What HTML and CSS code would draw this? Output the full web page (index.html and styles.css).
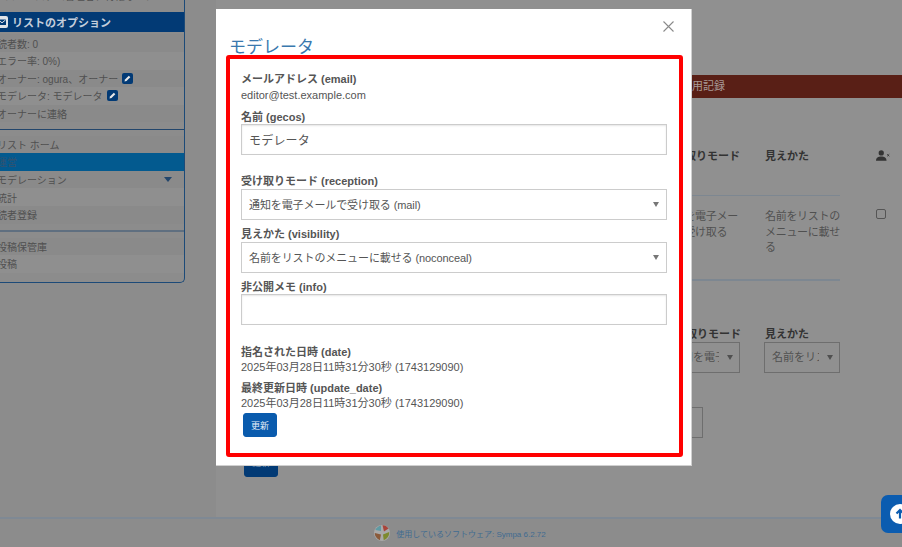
FILE: index.html
```html
<!DOCTYPE html>
<html lang="ja">
<head>
    <meta charset="UTF-8">
    <title>モデレータ</title>
    <link rel="stylesheet" href="styles.css">
</head>
<body>
    <div class="page">
        <aside class="sidebar">
            <p class="sidebar-top">リストシステム管理者、特権オーナー</p>
            <h3 class="sidebar-head">
                <svg class="head-icon" viewBox="0 0 12 12"><rect width="12" height="12" rx="2" fill="#dfe3e8"/><path d="M2 3.5h8v5.5H2z" fill="#023a75"/><path d="M2.5 4l3.5 2.8L9.500 4" fill="none" stroke="#dfe3e8"/></svg>
                リストのオプション
            </h3>
            <ul class="side-list side-first">
                <li>読者数: 0</li>
                <li>エラー率: 0%)</li>
                <li>オーナー: ogura、オーナー <span class="edit-icon"><svg viewBox="0 0 11 11"><path d="M2.500 8.500l.5-2 3.800-3.800 1.500 1.500-3.800 3.800z" fill="#e8e8e8"/></svg></span></li>
                <li>モデレータ: モデレータ <span class="edit-icon"><svg viewBox="0 0 11 11"><path d="M2.500 8.500l.5-2 3.800-3.800 1.500 1.500-3.800 3.800z" fill="#e8e8e8"/></svg></span></li>
                <li>オーナーに連絡</li>
            </ul>
            <ul class="side-list side-group">
                <li>リスト ホーム</li>
                <li class="active">運営</li>
                <li class="has-sub">モデレーション<span class="caret"></span></li>
                <li>統計</li>
                <li>読者登録</li>
            </ul>
            <ul class="side-list side-group side-last">
                <li>投稿保管庫</li>
                <li>投稿</li>
            </ul>
        </aside>
        <main class="main">
            <div class="log-bar">利用記録</div>
            <div class="member-table">
                <div class="cell head"></div>
                <div class="cell head">受け取りモード</div>
                <div class="cell head">見えかた</div>
                <div class="cell-icon">
                    <svg class="user-x" viewBox="0 0 16 12"><circle cx="6" cy="3" r="3" fill="#333"/><path d="M0 12c0-4 2.500-5 6-5s6 1 6 5z" fill="#333"/><path d="M12.800 4.500l2.400 2.400M15.200 4.500l-2.400 2.400" stroke="#333"/></svg>
                </div>
                <div class="cell body"></div>
                <div class="cell body mode-cell">通知を電子メールで受け取る</div>
                <div class="cell body">名前をリストのメニューに載せる</div>
                <div class="cell-icon body-icon-cell"><span class="checkbox"></span></div>
            </div>
            <div class="add-row">
                <div class="add-col"></div>
                <div class="add-col">
                    <div class="add-label">受け取りモード</div>
                    <div class="add-select"><span>通知を電子メールで受け取る</span></div>
                </div>
                <div class="add-col">
                    <div class="add-label">見えかた</div>
                    <div class="add-select"><span>名前をリストのメニューに載せる</span></div>
                </div>
            </div>
            <div class="add-input"></div>
            <button class="btn back-btn">更新</button>
        </main>
    </div>

    <footer class="footer">
        <svg class="sympa-logo" viewBox="0 0 16 18">
            <circle cx="8" cy="9" r="8" fill="#a9a9a9"/>
            <path d="M8.500 1.200c2.500 0 4.500 1.200 6 3.300L10 7.500z" fill="#a8443a"/>
            <path d="M7 1.500C4.500 2 2.500 3.500 1.300 6L7 7z" fill="#5f9aa3"/>
            <path d="M.8 9c0 3 1.500 5.500 5 7.200L7 10.500z" fill="#8a5a3a"/>
            <path d="M15.200 8c.2 3.500-1.500 6.500-5.500 8.200L9 10.500z" fill="#7d8a2e"/>
        </svg>
        <span>使用しているソフトウェア: Sympa 6.2.72</span>
    </footer>

    <a class="top-btn"><span class="top-circle"><svg viewBox="0 0 12 12"><path d="M6 10.500V2M2.500 5.500L6 2l3.500 3.500" fill="none" stroke="#0b5cb0" stroke-width="2.200"/></svg></span></a>

    <div class="modal">
        <button class="modal-close" aria-label="閉じる"><svg viewBox="0 0 11 11"><path d="M.5.5l10 10M10.500.5l-10 10" stroke="#8a8a8a" stroke-width="1.100"/></svg></button>
        <h2 class="modal-title">モデレータ</h2>
        <form class="modal-form">
            <label class="field-label email-label">メールアドレス (email)</label>
            <p class="field-value">editor@test.example.com</p>
            <label class="field-label name-label" for="gecos">名前 (gecos)</label>
            <input class="text-input" id="gecos" type="text" value="モデレータ">
            <label class="field-label reception-label" for="reception">受け取りモード (reception)</label>
            <div class="select-wrap">
                <select id="reception"><option>通知を電子メールで受け取る (mail)</option></select>
            </div>
            <label class="field-label" for="visibility">見えかた (visibility)</label>
            <div class="select-wrap">
                <select id="visibility"><option>名前をリストのメニューに載せる (noconceal)</option></select>
            </div>
            <label class="field-label" for="info">非公開メモ (info)</label>
            <input class="text-input" id="info" type="text">
            <label class="field-label date-label">指名された日時 (date)</label>
            <p class="field-value">2025年03月28日11時31分30秒 (1743129090)</p>
            <label class="field-label">最終更新日時 (update_date)</label>
            <p class="field-value">2025年03月28日11時31分30秒 (1743129090)</p>
            <button class="btn" type="button">更新</button>
        </form>
    </div>
</body>
</html>
```

FILE: styles.css
```css
* {
    box-sizing: border-box;
}
html, body {
    height: 547px;
    margin: 0;
    overflow: hidden;
}
body {
    position: relative;
    background-color: #8c8c8c;
    color: #505050;
    font-family: "Liberation Sans", "Noto Sans CJK JP", sans-serif;
    font-size: 11px;
}
ul, p, h2, h3 {
    margin: 0;
    padding: 0;
}

/* ページ本体 (暗くなっている部分) */
.page {
    display: flex;
    height: 525px;
    margin-top: -8px;
}
.sidebar {
    flex: none;
    width: 205px;
    height: 291px;
    margin-left: -20px;
    border: 1px solid #1c4a78;
    border-top: none;
    border-radius: 0 0 5px 5px;
}
.sidebar-top {
    height: 20px;
    padding-left: 14px;
    font-size: 10px;
    line-height: 10px;
    white-space: nowrap;
    overflow: hidden;
}
.sidebar-head {
    display: flex;
    align-items: center;
    gap: 4px;
    height: 20px;
    padding-left: 15px;
    background-color: #023a75;
    color: #c4cedb;
    font-size: 11px;
    font-weight: bold;
}
.head-icon {
    width: 12px;
    height: 12px;
}
.side-list {
    list-style: none;
    padding-bottom: 6px;
    font-size: 10px;
}
.side-first {
    padding-top: 2.4px;
    padding-bottom: 6.200px;
}
.side-group {
    border-top: 1px solid #23466c;
    padding-top: 6px;
}
.side-last {
    border-top: 2px solid #5f6f80;
}
.side-list li {
    display: flex;
    align-items: center;
    gap: 4px;
    height: 17.6px;
    padding-left: 16px;
    background-color: #8a8a8a;
    white-space: nowrap;
}
.side-list li:nth-child(even) {
    background-color: #8f8f8f;
}
.side-list li.active {
    background-color: #035a8f;
    color: #33526f;
}
.side-list li.has-sub {
    justify-content: space-between;
    padding-right: 12px;
}
.caret {
    border-left: 4.5px solid transparent;
    border-right: 4.5px solid transparent;
    border-top: 5px solid #23466c;
}
.edit-icon {
    display: inline-block;
    flex: none;
    width: 11px;
    height: 11px;
    background-color: #023a75;
    border-radius: 2px;
}
.edit-icon svg {
    display: block;
}

.main {
    flex: 1;
    min-width: 0;
    margin-left: 31px;
    padding: 83px 0 0 28px;
    background-color: #909090;
}
.log-bar {
    height: 23px;
    padding-left: 437px;
    line-height: 23px;
    background-color: #591f16;
    color: #a89a96;
}
.member-table {
    display: grid;
    grid-template-columns: 419px 102px 75px 36px 26px;
    grid-template-rows: 98px 85px;
}
.cell {
    padding-top: 49px;
    font-weight: bold;
    color: #333;
    border-bottom: 1px solid #7d8791;
}
.cell.body {
    padding: 13px 0 0 0;
    font-weight: normal;
    letter-spacing: -0.3px;
    line-height: 15.5px;
    color: #505050;
    border-bottom: 2px solid #7d8791;
}
.cell.mode-cell {
    padding-right: 22px;
}
.cell-icon {
    grid-column: 5;
    padding-top: 52px;
}
.cell-icon.body-icon-cell {
    padding-top: 13px;
}
.user-x {
    display: block;
    width: 14px;
    height: 11px;
}
.checkbox {
    display: block;
    width: 10px;
    height: 10px;
    border: 1px solid #555;
    border-radius: 2px;
}
.add-row {
    display: grid;
    grid-template-columns: 419px 77px 24px 76px;
    padding-top: 45px;
}
.add-row .add-col:nth-child(3) {
    grid-column: 4;
}
.add-label {
    height: 16px;
    padding-left: 1px;
    font-weight: bold;
    line-height: 16px;
    color: #333;
    white-space: nowrap;
}
.add-select {
    position: relative;
    height: 31px;
    padding: 0 20px 0 7px;
    line-height: 29px;
    border: 1px solid #6e6e6e;
    overflow: hidden;
    white-space: nowrap;
}
.add-select span {
    display: block;
    overflow: hidden;
}
.add-select::after {
    content: "";
    position: absolute;
    top: 12px;
    right: 6px;
    border-left: 3.5px solid transparent;
    border-right: 3.5px solid transparent;
    border-top: 5px solid #505050;
}
.add-input {
    width: 459px;
    height: 31px;
    margin-top: 34px;
    border: 1px solid #6e6e6e;
}
.btn {
    display: block;
    width: 34px;
    height: 24px;
    padding: 0;
    border: 1px solid #0a5bad;
    border-radius: 3px;
    background-color: #0a5bad;
    color: #e6eef8;
    font-family: inherit;
    font-size: 9px;
}
.btn.back-btn {
    height: 30px;
    margin-top: 9px;
    background-color: #023a75;
    border-color: #023a75;
    color: #8fa6bf;
}

.footer {
    display: flex;
    align-items: center;
    justify-content: center;
    gap: 6px;
    height: 30px;
    padding: 0 0 0 18px;
    border-top: 2px solid #7f8994;
    color: #3f6b91;
    font-size: 8px;
}
.sympa-logo {
    width: 16px;
    height: 18px;
}
.top-btn {
    position: absolute;
    left: 881px;
    top: 495px;
    display: flex;
    align-items: center;
    width: 30px;
    height: 38px;
    padding-left: 9px;
    background-color: #0b5cb0;
    border-radius: 7px 0 0 7px;
}
.top-circle {
    display: flex;
    align-items: center;
    justify-content: center;
    flex: none;
    width: 20px;
    height: 20px;
    border-radius: 50%;
    background-color: #fff;
}
.top-circle svg {
    width: 12px;
    height: 12px;
}

/* モーダル */
.modal {
    position: absolute;
    left: 216px;
    top: 9px;
    width: 476px;
    height: 457px;
    padding: 36px 8px 0 10px;
    background-color: #fff;
    border-right: 1px solid #d0d0d0;
    border-bottom: 1px solid #d0d0d0;
}
.modal-close {
    position: absolute;
    right: 17px;
    top: 12px;
    width: 11px;
    height: 11px;
    padding: 0;
    border: none;
    background: none;
}
.modal-close svg {
    display: block;
}
.modal-title {
    margin-left: 3px;
    height: 10px;
    color: #3a78ae;
    font-size: 17px;
    font-weight: normal;
    line-height: 6px;
}
.modal-form {
    display: flex;
    flex-direction: column;
    align-items: flex-start;
    height: 402px;
    padding: 13px 11px 0 11px;
    border: 4px solid #f00;
    border-radius: 3px;
}
.field-label {
    height: 14px;
    font-size: 11px;
    font-weight: bold;
    line-height: 14px;
    color: #555;
}
.email-label {
    margin-bottom: 1px;
}
.name-label {
    margin-top: 1px;
}
.field-value {
    height: 15px;
    margin: 1px 0 6px;
    line-height: 15px;
    color: #555;
}
.text-input {
    flex: none;
    width: 426px;
    height: 31px;
    padding: 0 7px;
    margin: 0;
    border: 1px solid #ccc;
    box-shadow: inset 0 1px 2px rgba(0, 0, 0, 0.1);
    color: #555;
    font-family: inherit;
    font-size: 12px;
    letter-spacing: 0.2px;
}
.reception-label {
    margin-top: 19px;
}
.select-wrap {
    position: relative;
    flex: none;
    width: 426px;
    margin: 1px 0 7px;
}
.select-wrap::after {
    content: "";
    position: absolute;
    top: 13px;
    right: 8px;
    border-left: 3.5px solid transparent;
    border-right: 3.5px solid transparent;
    border-top: 5px solid #777;
}
.select-wrap select {
    display: block;
    width: 100%;
    height: 31px;
    padding: 0 7px;
    border: 1px solid #ccc;
    border-radius: 0;
    background: #fff;
    color: #555;
    font-family: inherit;
    font-size: 11px;
    letter-spacing: -0.1px;
    appearance: none;
}
.date-label {
    margin-top: 20px;
}
.modal-form .btn {
    margin: -4px 0 0 2px;
}
```
